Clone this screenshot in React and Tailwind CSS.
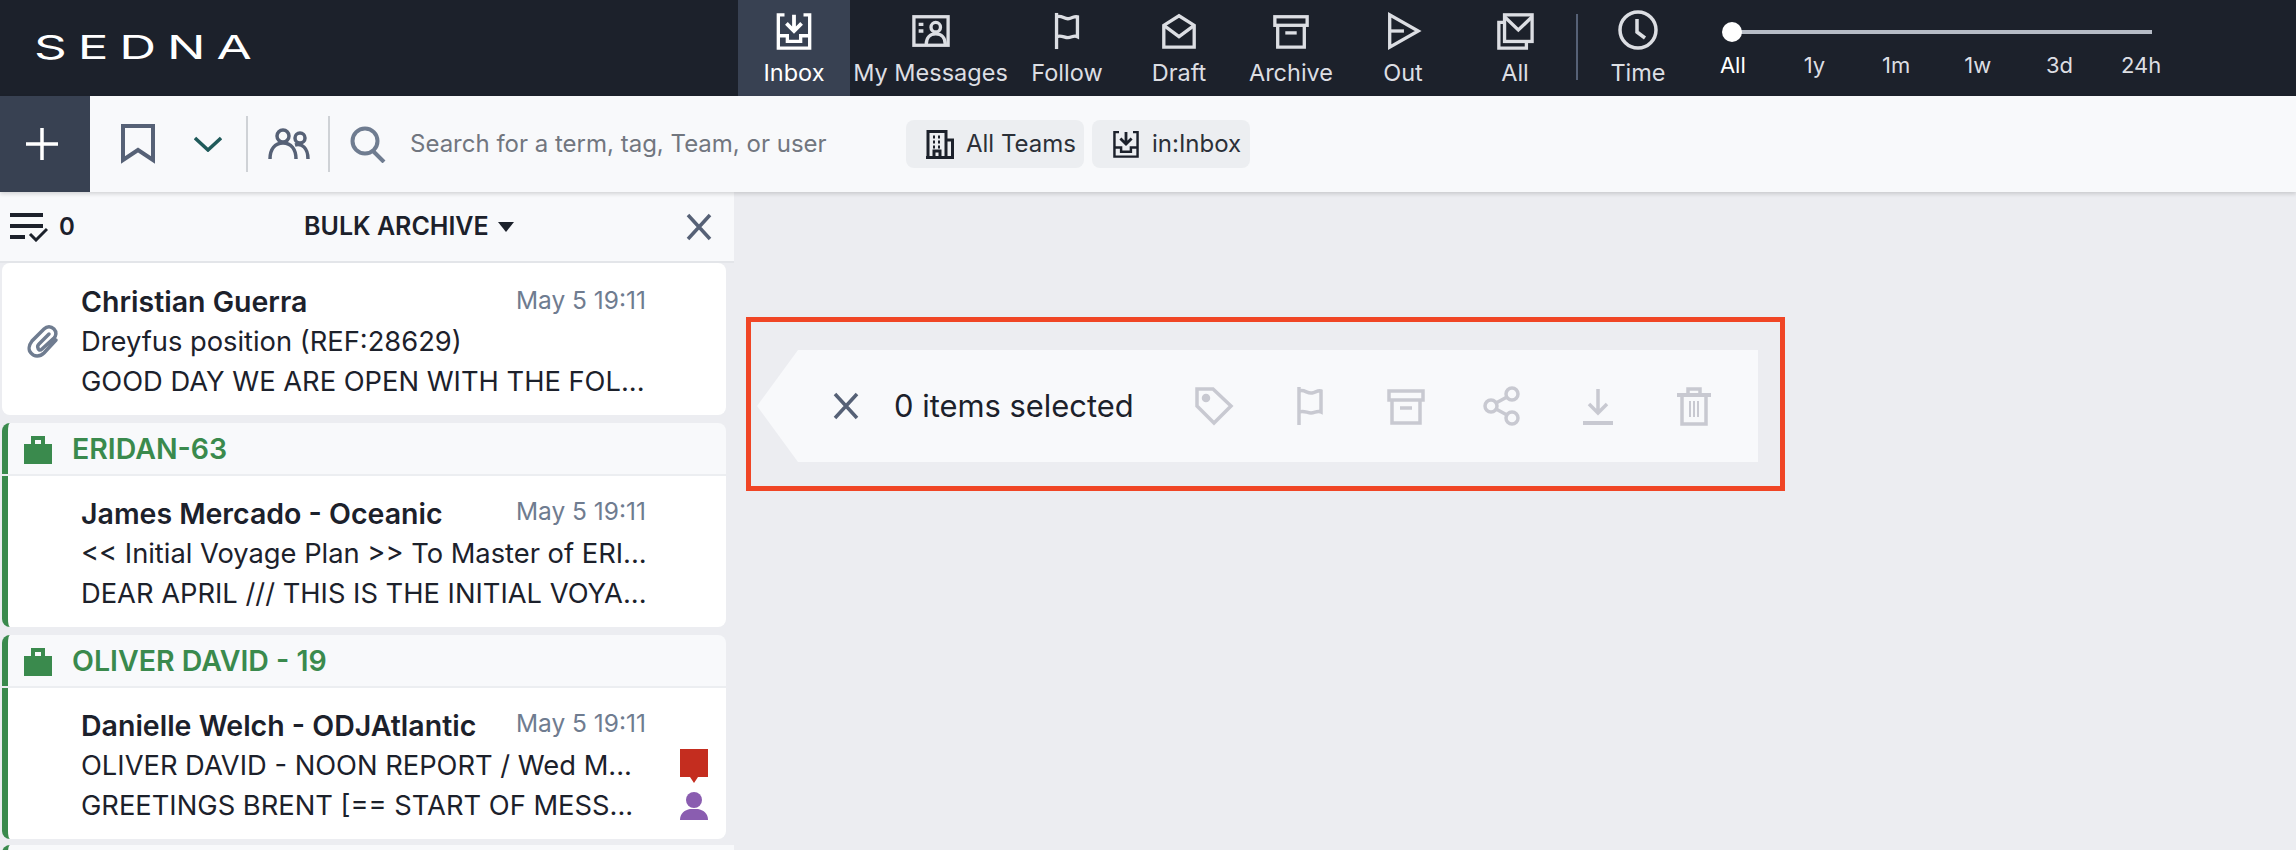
import React from "react";

const Icon = ({ className, size = 40, children, box = 40 }) => (
  <svg
    width={size}
    height={size}
    viewBox={`0 0 ${box} ${box}`}
    fill="none"
    stroke="currentColor"
    strokeWidth="3.5"
    strokeLinecap="butt"
    strokeLinejoin="miter"
    className={className}
  >
    {children}
  </svg>
);

const InboxIcon = (p) => (
  <Icon {...p}>
    <path d="M10 3H3.5V38H36.5V3H30" />
    <path d="M3.5 25H13V31H27V25H36.5" />
    <path d="M20 3V19M12 12L20 20L28 12" strokeWidth="4" />
  </Icon>
);
const MessagesIcon = (p) => (
  <Icon {...p}>
    <rect x="2" y="5" width="36" height="30" />
    <path d="M7 13H12M7 20H12" />
    <circle cx="25" cy="16" r="5" />
    <path d="M15 34C15 27 19 23 25 23C31 23 35 27 35 34" />
  </Icon>
);
const FlagIcon = (p) => (
  <Icon {...p}>
    <path d="M9 1V39" />
    <path d="M9 5C15 3 17 8 22 7C26 6 28 4 31 5V26C27 24 25 27 21 27C17 27 14 24 9 26" />
  </Icon>
);
const DraftIcon = (p) => (
  <Icon {...p}>
    <path d="M4 14V37H36V14L20 4Z" />
    <path d="M4 14L20 26L36 14" />
  </Icon>
);
const ArchiveIcon = (p) => (
  <Icon {...p}>
    <rect x="3" y="5" width="34" height="9" />
    <path d="M6 14V37H34V14" />
    <path d="M14 22H26" />
  </Icon>
);
const OutIcon = (p) => (
  <Icon {...p}>
    <path d="M6 3V37L36 20Z" />
    <path d="M6 20H21" />
  </Icon>
);
const AllIcon = (p) => (
  <Icon {...p}>
    <path d="M9 11H3V38H32V31" />
    <rect x="9" y="3" width="29" height="28" />
    <path d="M9 5L23.5 19L38 5" />
  </Icon>
);
const ClockIcon = (p) => (
  <Icon {...p}>
    <circle cx="20" cy="20" r="18" />
    <path d="M19 9V22L27 28" />
  </Icon>
);
const TagIcon = (p) => (
  <Icon {...p}>
    <path d="M3 3H19L37 20L20 37L3 20Z" />
    <circle cx="12" cy="12" r="2.5" fill="currentColor" />
  </Icon>
);
const ShareIcon = (p) => (
  <Icon {...p}>
    <circle cx="9" cy="20" r="6" />
    <circle cx="30" cy="8" r="6" />
    <circle cx="30" cy="32" r="6" />
    <path d="M14 17L25 11M14 23L25 29" />
  </Icon>
);
const DownloadIcon = (p) => (
  <Icon {...p}>
    <path d="M20 3V27M11 18L20 27L29 18" />
    <path d="M5 37H35" strokeWidth="4" />
  </Icon>
);
const TrashIcon = (p) => (
  <Icon {...p}>
    <path d="M3 9H37" strokeWidth="4" />
    <path d="M14 9V3H26V9" />
    <path d="M8 9V38H32V9" />
    <path d="M16 15V31M20 15V31M24 15V31" strokeWidth="2" />
  </Icon>
);
const CloseIcon = ({ className, size = 28 }) => (
  <svg width={size} height={size} viewBox="0 0 28 28" fill="none" stroke="currentColor" strokeWidth="3.5" className={className}>
    <path d="M3 2L25 26M25 2L3 26" />
  </svg>
);
const BagIcon = () => (
  <svg width="28" height="28" viewBox="0 0 28 28" className="shrink-0 text-[#3a8a4d]" fill="currentColor">
    <path fillRule="evenodd" d="M0 8H7V0H21V8H28V28H0ZM11 4V8H17V4Z" />
  </svg>
);

const navItems = [
  { label: "Inbox", icon: InboxIcon, active: true },
  { label: "My Messages", icon: MessagesIcon },
  { label: "Follow", icon: FlagIcon },
  { label: "Draft", icon: DraftIcon },
  { label: "Archive", icon: ArchiveIcon },
  { label: "Out", icon: OutIcon },
  { label: "All", icon: AllIcon },
];

const ranges = ["All", "1y", "1m", "1w", "3d", "24h"];

const NavItem = ({ label, icon: NavIcon, active }) => (
  <div
    className={`flex h-24 min-w-28 flex-col items-center pt-3 ${
      active ? "bg-[#384152] text-white" : "text-[#dcdee3]"
    } ${label === "My Messages" ? "w-[161px]" : "w-28"}`}
  >
    <NavIcon size={38} />
    <span className="mt-[7px] text-[23.5px] leading-8 whitespace-nowrap">{label}</span>
  </div>
);

const Row = ({ text, badge }) => (
  <div className="flex h-10 items-center">
    <span className="w-[599px] text-[27.3px] leading-10 whitespace-nowrap text-[#1c212b]">{text}</span>
    {badge}
  </div>
);

const MessageBody = ({ name, subject, preview, clip, flagged }) => (
  <div className="flex h-full items-center pt-1">
    <div className="flex w-[79px] shrink-0 justify-center pl-1">
      {clip && (
        <svg width="34" height="34" viewBox="0 0 34 34" fill="none" stroke="#6f7c90" strokeWidth="3.5" strokeLinecap="round">
          <path d="M29 15L17 28C13 32 7 32 4 28C1 25 2 20 5 16L17 4C20 1 24 1 27 4C30 7 29 11 27 13L15 24C13 26 11 25 11 23C10 21 11 20 12 19L22 9" />
        </svg>
      )}
    </div>
    <div>
      <div className="flex h-10 items-center">
        <span className="w-[430px] text-[28.5px] font-semibold leading-10 whitespace-nowrap text-[#1c212b]">{name}</span>
        <span className="-mt-1 w-[135px] text-right text-[24.5px] whitespace-nowrap text-[#6f7c90]">May 5 19:11</span>
      </div>
      <Row
        text={subject}
        badge={
          flagged && (
            <svg width="28" height="38" viewBox="0 0 28 38" fill="#c42d1f">
              <path d="M0 2H28V30H18L14 36L10 30H0Z" />
            </svg>
          )
        }
      />
      <Row
        text={preview}
        badge={
          flagged && (
            <svg width="28" height="30" viewBox="0 0 28 30" fill="#8a5db0">
              <circle cx="14" cy="9" r="8" />
              <path d="M0 29C0 22 5 19 10 18H18C23 19 28 22 28 29Z" />
            </svg>
          )
        }
      />
    </div>
  </div>
);

const Group = ({ title, ...msg }) => (
  <div className="mt-2 w-[724px] overflow-hidden rounded-r-lg">
    <div className="flex h-[51px] items-center gap-[20px] rounded-tl-lg border-l-[6px] border-[#3a8a4d] bg-[#f8f9fb] pt-[2px] pl-4">
      <BagIcon />
      <span className="text-[28.5px] font-semibold text-[#3a8a4d]">{title}</span>
    </div>
    <div className="h-[2px] bg-[#eceef1]" />
    <div className="h-[151px] rounded-bl-lg border-l-[6px] border-[#3a8a4d] bg-white [&>div]:-ml-[6px]">
      <MessageBody {...msg} />
    </div>
  </div>
);

const App = () => {
  return (
    <div className="flex h-[850px] w-full flex-col overflow-hidden bg-[#ecedf1] font-['Inter',sans-serif]">
      {/* top bar */}
      <header className="flex h-24 shrink-0 bg-[#1c212b]">
        <div className="w-[738px] pl-[34px] pt-[27px]">
          <span className="inline-block origin-left scale-x-[1.55] text-[33px] leading-[40px] tracking-[7px] text-white">
            SEDNA
          </span>
        </div>
        {navItems.map((item) => (
          <NavItem key={item.label} {...item} />
        ))}
        <div className="mt-[14px] ml-[5px] h-[66px] w-[2px] bg-[#566176]" />
        <div className="ml-[20px] flex w-[80px] flex-col items-center pt-[10px] text-[#dcdee3]">
          <ClockIcon size={40} />
          <span className="mt-[7px] text-[23.5px] leading-8">Time</span>
        </div>
        <div className="ml-[34px] w-[440px]">
          <div className="relative mt-[30px] ml-[20px] h-1 w-[420px] bg-[#b6bcc6]">
            <span className="absolute -top-[8px] -left-[10px] h-5 w-5 rounded-full bg-white" />
          </div>
          <div className="mt-[15px] grid w-[490px] -ml-[20px] grid-cols-6 text-center text-[22px] leading-8 text-[#dcdee3]">
            {ranges.map((r, i) => (
              <span key={r} className={i === 0 ? "text-white" : ""}>
                {r}
              </span>
            ))}
          </div>
        </div>
      </header>

      {/* search toolbar */}
      <div className="z-10 flex h-24 shrink-0 items-center bg-[#f8f9fb] shadow-[0_2px_4px_rgba(0,0,0,0.15)]">
        <div className="flex h-24 w-[90px] items-center justify-center bg-[#384152] pr-[6px] text-white">
          <svg width="34" height="34" viewBox="0 0 34 34" stroke="currentColor" strokeWidth="3.5">
            <path d="M17 1V33M1 17H33" />
          </svg>
        </div>
        <svg width="34" height="40" viewBox="0 0 34 40" fill="none" stroke="#566176" strokeWidth="4" className="ml-[31px]">
          <path d="M2 2H32V36L17 26L2 36Z" />
        </svg>
        <svg width="28" height="16" viewBox="0 0 28 16" fill="none" stroke="#1f5a5a" strokeWidth="3.5" className="ml-[39px]">
          <path d="M1 2L14 14L27 2" />
        </svg>
        <div className="ml-[24px] h-14 w-[2px] bg-[#cfd2d6]" />
        <svg width="42" height="32" viewBox="0 0 42 32" fill="none" stroke="#566176" strokeWidth="3.5" className="ml-5">
          <circle cx="15" cy="8" r="6" />
          <circle cx="32" cy="10" r="5" />
          <path d="M2 31C2 21 7 15 15 15C23 15 28 21 28 31" />
          <path d="M27 17C34 15 40 20 40 31" />
        </svg>
        <div className="ml-[18px] h-14 w-[2px] bg-[#cfd2d6]" />
        <svg width="36" height="37" viewBox="0 0 36 37" fill="none" stroke="#6f7c90" strokeWidth="4" className="ml-[20px]">
          <circle cx="15" cy="15" r="12.5" />
          <path d="M23 25L34 36" />
        </svg>
        <span className="ml-[24px] w-[496px] text-2xl whitespace-nowrap text-[#71767f]">
          Search for a term, tag, Team, or user
        </span>
        <div className="flex h-12 w-[178px] items-center gap-3 rounded-lg bg-[#eceef1] pl-5 text-2xl whitespace-nowrap text-[#2b3038]">
          <svg width="28" height="29" viewBox="0 0 28 29" fill="none" stroke="#1c212b" strokeWidth="3" className="shrink-0">
            <path d="M2 28V1.5H20V28M20 10H26.5V28M0 27.5H28" />
            <path d="M7 7H9M12 7H14M7 12H9M12 12H14M7 17H9M12 17H14" />
            <path d="M8 27V21H14V27" />
          </svg>
          All Teams
        </div>
        <div className="ml-2 flex h-12 w-[158px] items-center gap-3 rounded-lg bg-[#eceef1] pl-5 text-2xl whitespace-nowrap text-[#2b3038]">
          <InboxIcon size={28} className="shrink-0 text-[#1c212b]" />
          in:Inbox
        </div>
      </div>

      <div className="flex min-h-0 flex-1">
        {/* message list */}
        <aside className="w-[734px] shrink-0 overflow-hidden">
          <div className="flex h-[71px] items-center border-b-2 border-[#e3e5e9] bg-[#f8f9fb] pl-[10px]">
            <svg width="38" height="30" viewBox="0 0 38 30" fill="none" stroke="#1c212b">
              <path d="M0 3H33M0 14H33M0 25H15" strokeWidth="4" />
              <path d="M20 22L26 28L37 17" strokeWidth="3" />
            </svg>
            <span className="ml-[11px] w-[245px] text-2xl font-semibold text-[#1c212b]">0</span>
            <span className="text-[25px] font-semibold text-[#1c212b]">BULK ARCHIVE</span>
            <svg width="16" height="10" viewBox="0 0 16 10" fill="#1c212b" className="ml-[9px]">
              <path d="M0 0H16L8 10Z" />
            </svg>
            <CloseIcon size={28} className="ml-[171px] text-[#566176]" />
          </div>
          <div className="ml-[2px] h-[152px] w-[724px] rounded-lg bg-white pt-[2px]">
            <MessageBody
              clip
              name="Christian Guerra"
              subject="Dreyfus position (REF:28629)"
              preview="GOOD DAY WE ARE OPEN WITH THE FOL..."
            />
          </div>
          <div className="ml-[2px]">
            <Group
              title="ERIDAN-63"
              name="James Mercado - Oceanic"
              subject="<< Initial Voyage Plan >> To Master of ERI..."
              preview="DEAR APRIL /// THIS IS THE INITIAL VOYA..."
            />
            <Group
              flagged
              title="OLIVER DAVID - 19"
              name="Danielle Welch - ODJAtlantic"
              subject="OLIVER DAVID - NOON REPORT / Wed M..."
              preview="GREETINGS BRENT [== START OF MESS..."
            />
            <div className="mt-[6px] h-10 rounded-tl-lg border-l-[6px] border-[#3a8a4d] bg-[#f8f9fb]" />
          </div>
        </aside>

        {/* bulk action bar with highlight frame */}
        <main className="min-w-0 flex-1 pt-[125px] pl-3">
          <div className="h-[174px] w-[1039px] border-[5px] border-[#f04525] pt-[28px] pl-[6px]">
            <div className="flex h-28 w-[1001px] items-center bg-[#f8f9fb] [clip-path:polygon(0_50%,41px_0,100%_0,100%_100%,41px_100%)]">
              <CloseIcon size={28} className="ml-[75px] text-[#566176]" />
              <span className="ml-[34px] w-[270px] text-[30.9px] whitespace-nowrap text-[#1c212b]">0 items selected</span>
              <div className="ml-[30px] flex gap-[56px] text-[#c8c9d1]">
                <TagIcon />
                <FlagIcon />
                <ArchiveIcon />
                <ShareIcon />
                <DownloadIcon />
                <TrashIcon />
              </div>
            </div>
          </div>
        </main>
      </div>
    </div>
  );
};

export default App;
